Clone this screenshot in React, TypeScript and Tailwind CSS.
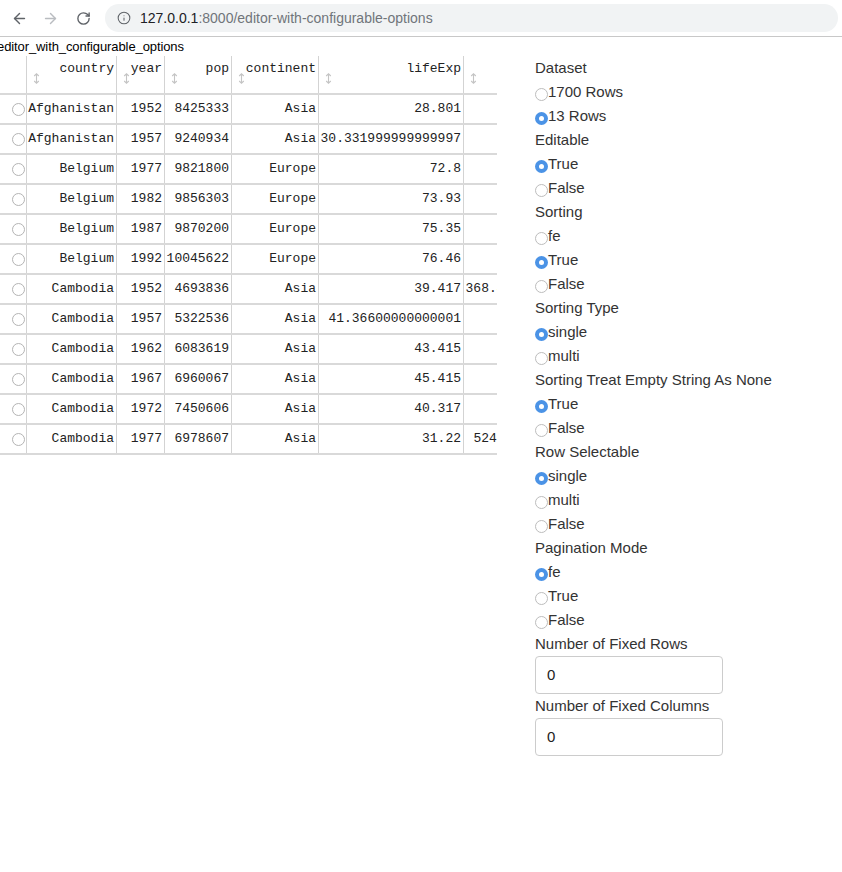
import React from "react";
import { ArrowLeft, ArrowRight, RotateCw, Info } from "lucide-react";

const rows: string[][] = [
  ["Afghanistan", "1952", "8425333", "Asia", "28.801", "779.4453145"],
  ["Afghanistan", "1957", "9240934", "Asia", "30.331999999999997", "820.8530296"],
  ["Belgium", "1977", "9821800", "Europe", "72.8", "19117.97448"],
  ["Belgium", "1982", "9856303", "Europe", "73.93", "20979.84589"],
  ["Belgium", "1987", "9870200", "Europe", "75.35", "22525.56308"],
  ["Belgium", "1992", "10045622", "Europe", "76.46", "25575.57069"],
  ["Cambodia", "1952", "4693836", "Asia", "39.417", "368.46928560000003"],
  ["Cambodia", "1957", "5322536", "Asia", "41.36600000000001", "434.0383364"],
  ["Cambodia", "1962", "6083619", "Asia", "43.415", "496.9136476"],
  ["Cambodia", "1967", "6960067", "Asia", "45.415", "523.4323142"],
  ["Cambodia", "1972", "7450606", "Asia", "40.317", "421.6240257"],
  ["Cambodia", "1977", "6978607", "Asia", "31.22", "524.9721831999999"],
];

const headers = ["country", "year", "pop", "continent", "lifeExp", "gdpPercap"];
const widths = ["w-[90px]", "w-[48px]", "w-[67px]", "w-[87px]", "w-[145px]", "w-[144px]"];

function SortArrow() {
  return (
    <svg width="7" height="11" viewBox="0 0 7 11" className="shrink-0">
      <path d="M3.5 1 L3.5 10" stroke="#c4c4c4" strokeWidth="1.1" />
      <path d="M1.2 3 L3.5 0.8 L5.8 3" stroke="#c4c4c4" strokeWidth="1.1" fill="none" />
      <path d="M1.2 8 L3.5 10.2 L5.8 8" stroke="#c4c4c4" strokeWidth="1.1" fill="none" />
    </svg>
  );
}

function TableRadio() {
  return <span className="block w-[13px] h-[13px] rounded-full border border-[#b4b4b4] bg-white" />;
}

function PanelRadio({ checked }: { checked?: boolean }) {
  if (checked) {
    return (
      <span className="flex items-center justify-center w-[13px] h-[13px] rounded-full bg-[#4b93e6] translate-y-[2px] shrink-0">
        <span className="block w-[5px] h-[5px] rounded-full bg-white" />
      </span>
    );
  }
  return (
    <span className="block w-[13px] h-[13px] rounded-full border border-[#bdbdbd] bg-white translate-y-[2px] shrink-0" />
  );
}

function Group({ label, options, checked }: { label: string; options: string[]; checked: number }) {
  return (
    <div className="flex flex-col">
      <div className="h-[24px] flex items-center">{label}</div>
      {options.map((o, i) => (
        <div key={i} className="h-[24px] flex items-center">
          <PanelRadio checked={i === checked} />
          <span>{o}</span>
        </div>
      ))}
    </div>
  );
}

export default function App() {
  return (
    <div className="w-[842px] h-[872px] bg-white overflow-hidden" style={{ fontFamily: '"Liberation Sans", Arial, sans-serif' }}>
      {/* Browser chrome */}
      <div className="h-[37px] flex items-center border-b border-[#c8c8c8] bg-white">
        <div className="w-[36px] flex justify-center pl-[2px]">
          <ArrowLeft size={17} strokeWidth={2} color="#5f6368" />
        </div>
        <div className="w-[28px] flex justify-center">
          <ArrowRight size={17} strokeWidth={2} color="#b9bcc0" />
        </div>
        <div className="w-[38px] flex justify-center">
          <RotateCw size={15} strokeWidth={2.2} color="#5f6368" />
        </div>
        <div className="ml-[3px] flex-1 h-[28px] rounded-l-full bg-[#f1f3f4] flex items-center pl-[12px] mr-[4px] rounded-r-full">
          <Info size={14} strokeWidth={1.8} color="#5f6368" />
          <span className="ml-[9px] text-[14px] text-[#202124]">
            127.0.0.1<span className="text-[#70757a]">:8000/editor-with-configurable-options</span>
          </span>
        </div>
      </div>

      {/* Page */}
      <div className="h-[19px] -ml-[3px] text-[13px] leading-[19px] text-black tracking-[-0.1px]">editor_with_configurable_options</div>
      <div className="flex items-start">
        {/* Table */}
        <div className="w-[497px] overflow-hidden shrink-0" style={{ fontFamily: '"Liberation Mono", "Courier New", monospace' }}>
          <div className="w-[700px] text-[13px] text-[#222]">
            <div className="flex h-[39px] border-b-2 border-[#d9d9d9]">
              <div className="w-[27px] border-r border-[#d3d3d3] shrink-0" />
              {headers.map((h, i) => (
                <div key={h} className={`${widths[i]} shrink-0 flex justify-between pl-[6px] pr-[2px] ${i < 5 ? "border-r border-[#d3d3d3]" : ""}`}>
                  <div className="pt-[17px]"><SortArrow /></div>
                  <div className="pt-[5px] leading-[16px] whitespace-nowrap">{h}</div>
                </div>
              ))}
            </div>
            {rows.map((r, ri) => (
              <div key={ri} className="flex h-[30px] border-b-2 border-[#d9d9d9]">
                <div className="w-[27px] border-r border-[#d3d3d3] shrink-0 flex items-center justify-end pr-[1px]">
                  <TableRadio />
                </div>
                {r.map((c, ci) => (
                  <div key={ci} className={`${widths[ci]} shrink-0 flex items-center justify-end pr-[2px] whitespace-nowrap overflow-hidden ${ci < 5 ? "border-r border-[#d3d3d3]" : ""}`}>
                    {c}
                  </div>
                ))}
              </div>
            ))}
          </div>
        </div>

        {/* Options panel */}
        <div className="ml-[38px] text-[15px] text-[#333] flex flex-col">
          <Group label="Dataset" options={["1700 Rows", "13 Rows"]} checked={1} />
          <Group label="Editable" options={["True", "False"]} checked={0} />
          <Group label="Sorting" options={["fe", "True", "False"]} checked={1} />
          <Group label="Sorting Type" options={["single", "multi"]} checked={0} />
          <Group label="Sorting Treat Empty String As None" options={["True", "False"]} checked={0} />
          <Group label="Row Selectable" options={["single", "multi", "False"]} checked={0} />
          <Group label="Pagination Mode" options={["fe", "True", "False"]} checked={0} />
          <div className="h-[24px] flex items-center">Number of Fixed Rows</div>
          <div className="w-[188px] h-[38px] border border-[#cccccc] rounded-[4px] flex items-center pl-[11px] text-[#222]">0</div>
          <div className="h-[24px] flex items-center">Number of Fixed Columns</div>
          <div className="w-[188px] h-[38px] border border-[#cccccc] rounded-[4px] flex items-center pl-[11px] text-[#222]">0</div>
        </div>
      </div>
    </div>
  );
}
